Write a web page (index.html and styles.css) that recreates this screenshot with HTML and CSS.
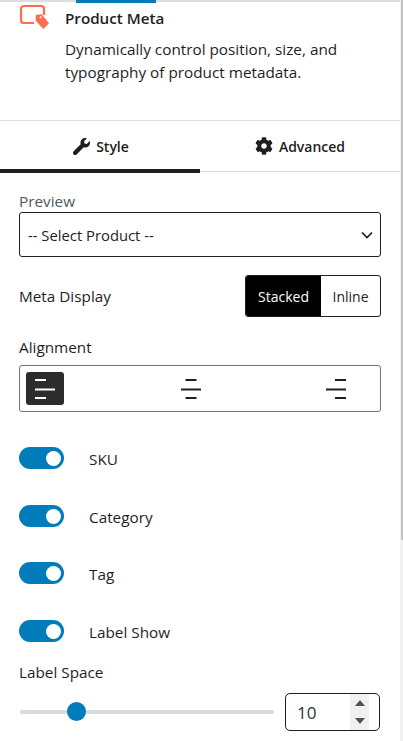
FILE: index.html
```html
<!DOCTYPE html>
<html lang="en">
<head>
    <meta charset="UTF-8">
    <title>Product Meta</title>
    <link rel="stylesheet" href="styles.css">
</head>
<body>
<div class="page">
    <div class="panel">
        <div class="topline"><span class="topline-mark"></span></div>
        <div class="block-card">
            <svg class="block-icon" width="29" height="25" viewBox="0 0 29 25">
                <path d="M14 18H4a3 3 0 0 1-3-3V4a3 3 0 0 1 3-3h17a3 3 0 0 1 3 3v6" fill="none" stroke="#ff6b4d" stroke-width="2.200"/>
                <path fill-rule="evenodd" d="M15.700 10l6-.7 7.300 9-5.700 5.700-7.600-8.300zM20.700 11.300a1 1 0 1 0 .01 0z" fill="#ff6b4d"/>
            </svg>
            <div class="block-text">
                <h2 class="block-title">Product Meta</h2>
                <p class="block-desc">Dynamically control position, size, and typography of product metadata.</p>
            </div>
        </div>
        <div class="tabs">
            <div class="tab active">
                <svg width="17" height="17" viewBox="0 0 512 512"><path fill="#1e1e1e" d="M507.700 109.100c-2.200-9-13.500-12.100-20.100-5.500l-74.400 74.400-67.900-11.300-11.300-67.900 74.400-74.400c6.600-6.600 3.400-17.900-5.700-20.200-47.400-11.700-99.500.9-136.500 37.900-39.600 39.600-50.500 97.100-34.100 147.200L18.700 402.800c-25 25-25 65.500 0 90.500 25 25 65.500 25 90.500 0l213.200-213.200c50.100 16.700 107.500 5.700 147.400-34.200 37.100-37.100 49.700-89.300 37.900-136.800z"/></svg>
                <span>Style</span>
            </div>
            <div class="tab">
                <svg width="18" height="18" viewBox="0 0 512 512"><path fill="#1e1e1e" d="M487.400 315.700l-42.600-24.600c4.300-23.200 4.300-47 0-70.200l42.600-24.600c4.900-2.800 7.100-8.600 5.500-14-11.100-35.600-30-67.800-54.700-94.600-3.800-4.100-10-5.100-14.800-2.300L380.800 110c-17.900-15.400-38.500-27.300-60.800-35.100V25.800c0-5.600-3.900-10.500-9.400-11.700-36.700-8.200-74.300-7.800-109.200 0-5.500 1.200-9.400 6.100-9.400 11.700V75c-22.200 7.900-42.800 19.800-60.800 35.100L88.700 85.500c-4.900-2.800-11-1.900-14.800 2.300-24.700 26.700-43.600 58.900-54.700 94.600-1.700 5.400.6 11.200 5.500 14L67.300 221c-4.300 23.200-4.300 47 0 70.200l-42.600 24.600c-4.900 2.800-7.100 8.600-5.500 14 11.100 35.600 30 67.800 54.700 94.600 3.800 4.100 10 5.100 14.800 2.300l42.600-24.600c17.900 15.400 38.500 27.300 60.800 35.100v49.200c0 5.600 3.900 10.500 9.400 11.700 36.700 8.200 74.300 7.800 109.200 0 5.500-1.200 9.400-6.100 9.400-11.700v-49.200c22.200-7.900 42.800-19.800 60.800-35.100l42.600 24.600c4.900 2.800 11 1.900 14.800-2.300 24.700-26.700 43.600-58.900 54.700-94.600 1.500-5.500-.7-11.300-5.600-14.100zM256 336c-44.100 0-80-35.900-80-80s35.900-80 80-80 80 35.900 80 80-35.900 80-80 80z"/></svg>
                <span>Advanced</span>
            </div>
        </div>
        <div class="controls">
            <label class="field-label preview-label">Preview</label>
            <div class="select">
                <span>-- Select Product --</span>
                <svg width="12" height="8" viewBox="0 0 12 8"><path d="M1 1.500l5 5 5-5" fill="none" stroke="#1e1e1e" stroke-width="1.700"/></svg>
            </div>

            <div class="display-row">
                <span class="field-label">Meta Display</span>
                <div class="btn-group">
                    <span class="seg seg-on">Stacked</span>
                    <span class="seg">Inline</span>
                </div>
            </div>

            <label class="field-label align-label">Alignment</label>
            <div class="align-box">
                <span class="align-btn on">
                    <svg width="20" height="20" viewBox="0 0 20 20"><path d="M0 1h11M0 10.500h20M0 19h11" stroke="#fff" stroke-width="2"/></svg>
                </span>
                <span class="align-btn">
                    <svg width="20" height="20" viewBox="0 0 20 20"><path d="M4.500 1h11M0 10.500h20M4.500 19h11" stroke="#1e1e1e" stroke-width="2"/></svg>
                </span>
                <span class="align-btn">
                    <svg width="20" height="20" viewBox="0 0 20 20"><path d="M9 1h11M0 10.500h20M9 19h11" stroke="#1e1e1e" stroke-width="2"/></svg>
                </span>
            </div>

            <div class="toggle-row first"><span class="toggle"></span><span class="toggle-label">SKU</span></div>
            <div class="toggle-row"><span class="toggle"></span><span class="toggle-label">Category</span></div>
            <div class="toggle-row short"><span class="toggle"></span><span class="toggle-label">Tag</span></div>
            <div class="toggle-row"><span class="toggle"></span><span class="toggle-label">Label Show</span></div>

            <label class="field-label space-label">Label Space</label>
            <div class="range-row">
                <div class="range"><span class="range-thumb"></span></div>
                <div class="number">
                    <span class="number-value">10</span>
                    <span class="spin">
                        <svg width="10" height="6" viewBox="0 0 10 6"><path d="M5 0l5 6H0z" fill="#505050"/></svg>
                        <svg width="10" height="6" viewBox="0 0 10 6"><path d="M5 6L0 0h10z" fill="#505050"/></svg>
                    </span>
                </div>
            </div>
        </div>
    </div>
    <div class="scrollbar"><span class="scroll-thumb"></span></div>
</div>
</body>
</html>
```

FILE: styles.css
```css
html,body,h2,p{margin:0;padding:0}
body{
    font:15.3px/23px "Open Sans", "Noto Sans", sans-serif;
    color:#1e1e1e;
    background:#fff;
    overflow:hidden;
}
.page{
    display:flex;
    width:403px;
    height:741px;
    overflow:hidden;
}
.panel{
    width:400px;
    flex:none;
}
.scrollbar{
    width:3px;
    background:#f1f1f1;
}
.scroll-thumb{
    display:block;
    width:2px;
    height:540px;
    margin-left:1px;
    background:#c1c1c1;
}
.topline{
    height:3px;
    border-top:2px solid #ddd;
    box-sizing:border-box;
}
.topline-mark{
    display:block;
    width:80px;
    height:3px;
    margin:-2px 0 0 76px;
    background:#007cba;
}
.block-card{
    display:flex;
    height:118px;
    box-sizing:border-box;
    padding:2px 0 0 20px;
    border-bottom:1px solid #ddd;
}
.block-icon{
    flex:none;
    margin-right:16px;
}
.block-title{
    font-size:15.2px;
    font-weight:600;
    line-height:23px;
    margin-top:2px;
}
.block-desc{
    margin-top:8px;
    width:300px;
}
.tabs{
    display:flex;
    align-items:flex-start;
    height:50px;
    border-bottom:1px solid #ddd;
}
.tab{
    flex:none;
    width:200px;
    display:flex;
    align-items:center;
    justify-content:center;
    gap:6px;
    font-size:14px;
    font-weight:600;
    height:50px;
    box-sizing:border-box;
}
.tab.active{
    height:52px;
    padding:2px 0 0 2px;
    border-bottom:4px solid #1e1e1e;
}
.controls{
    padding:0 19px;
}
.field-label{
    display:block;
}
.preview-label{
    margin-top:18px;
    color:#50575e;
}
.select{
    display:flex;
    align-items:center;
    justify-content:space-between;
    height:45px;
    box-sizing:border-box;
    margin-top:-1px;
    padding:1px 7px 0 8px;
    border:1px solid #1e1e1e;
    border-radius:3px;
    font-size:14.8px;
}
.display-row{
    display:flex;
    align-items:center;
    justify-content:space-between;
    margin-top:18px;
}
.btn-group{
    display:flex;
    height:42px;
    box-sizing:border-box;
    border:1px solid #1e1e1e;
    border-radius:3px;
    overflow:hidden;
    font-size:14px;
}
.seg{
    display:flex;
    align-items:center;
    justify-content:center;
    width:59px;
}
.seg-on{
    width:75px;
    background:#000;
    color:#fff;
}
.align-label{
    margin-top:19px;
}
.align-box{
    display:flex;
    justify-content:space-between;
    height:47px;
    box-sizing:border-box;
    margin-top:6px;
    padding:6px 25px 6px 6px;
    border:1px solid #757575;
    border-radius:3px;
}
.align-btn{
    display:flex;
    align-items:center;
    justify-content:center;
    width:38px;
    height:33px;
    border-radius:3px;
}
.align-btn.on{
    background:#2c2c2c;
}
.toggle-row{
    display:flex;
    align-items:center;
    gap:25px;
    height:22px;
    margin-top:36px;
}
.toggle-row.first{
    margin-top:35px;
}
.toggle-row.short{
    margin-top:35px;
}
.toggle-label{
    padding-top:2px;
}
.toggle{
    display:flex;
    align-items:center;
    justify-content:flex-end;
    width:45px;
    height:22px;
    padding-right:3px;
    box-sizing:border-box;
    border-radius:11px;
    background:#007cba;
}
.toggle::after{
    content:"";
    width:15px;
    height:15px;
    border-radius:50%;
    background:#fff;
}
.space-label{
    margin-top:19px;
}
.range-row{
    display:flex;
    align-items:center;
    justify-content:space-between;
    margin-top:9px;
}
.range{
    position:relative;
    width:254px;
    height:4px;
    margin-left:1px;
    border-radius:2px;
    background:#d7dade;
}
.range-thumb{
    position:absolute;
    left:47px;
    top:-8px;
    width:19px;
    height:19px;
    border-radius:50%;
    background:#007cba;
}
.number{
    display:flex;
    align-items:center;
    justify-content:space-between;
    width:95px;
    height:38px;
    box-sizing:border-box;
    margin-right:1px;
    padding-left:11px;
    border:1px solid #1e1e1e;
    border-radius:5px;
    font-size:17px;
}
.number-value{
    color:#2c3338;
}
.spin{
    display:flex;
    flex-direction:column;
    align-items:center;
    justify-content:space-around;
    width:19px;
    height:36px;
    margin-right:10px;
    background:#f0f0f0;
}
.spin svg{
    display:block;
}
```
